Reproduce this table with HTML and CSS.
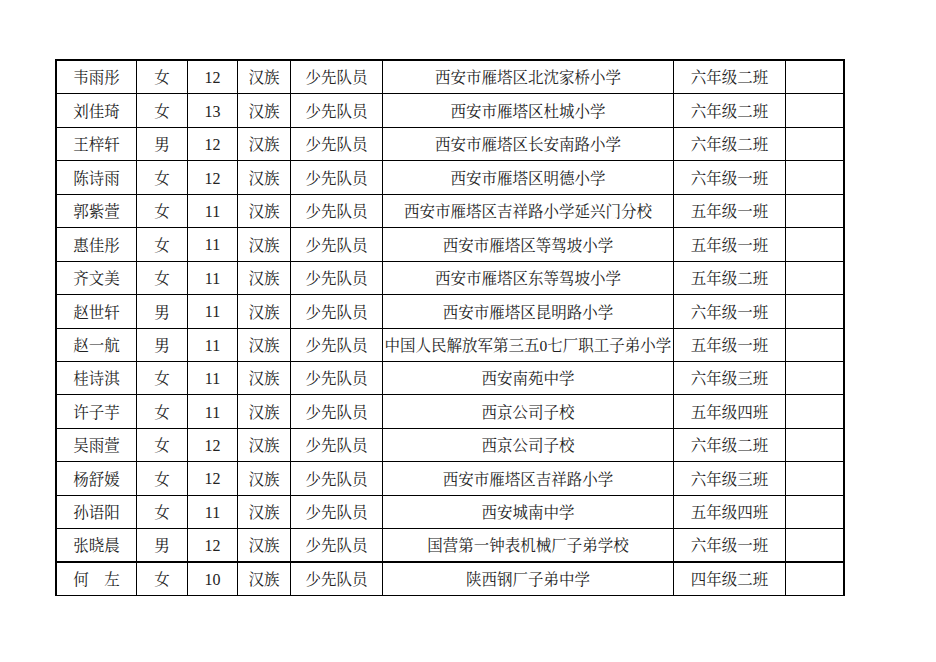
FILE: index.html
```html
<!DOCTYPE html>
<html lang="zh-CN">
<head>
<meta charset="utf-8">
<title>名单</title>
<link rel="stylesheet" href="styles.css">
</head>
<body>
<div class="sheet">
  <div class="c">韦雨彤</div><div class="c">女</div><div class="c num">12</div><div class="c">汉族</div><div class="c">少先队员</div><div class="c">西安市雁塔区北沈家桥小学</div><div class="c">六年级二班</div><div class="c last"></div>
  <div class="c">刘佳琦</div><div class="c">女</div><div class="c num">13</div><div class="c">汉族</div><div class="c">少先队员</div><div class="c">西安市雁塔区杜城小学</div><div class="c">六年级二班</div><div class="c last"></div>
  <div class="c">王梓轩</div><div class="c">男</div><div class="c num">12</div><div class="c">汉族</div><div class="c">少先队员</div><div class="c">西安市雁塔区长安南路小学</div><div class="c">六年级二班</div><div class="c last"></div>
  <div class="c">陈诗雨</div><div class="c">女</div><div class="c num">12</div><div class="c">汉族</div><div class="c">少先队员</div><div class="c">西安市雁塔区明德小学</div><div class="c">六年级一班</div><div class="c last"></div>
  <div class="c">郭紫萱</div><div class="c">女</div><div class="c num">11</div><div class="c">汉族</div><div class="c">少先队员</div><div class="c">西安市雁塔区吉祥路小学延兴门分校</div><div class="c">五年级一班</div><div class="c last"></div>
  <div class="c">惠佳彤</div><div class="c">女</div><div class="c num">11</div><div class="c">汉族</div><div class="c">少先队员</div><div class="c">西安市雁塔区等驾坡小学</div><div class="c">五年级一班</div><div class="c last"></div>
  <div class="c">齐文美</div><div class="c">女</div><div class="c num">11</div><div class="c">汉族</div><div class="c">少先队员</div><div class="c">西安市雁塔区东等驾坡小学</div><div class="c">五年级二班</div><div class="c last"></div>
  <div class="c">赵世轩</div><div class="c">男</div><div class="c num">11</div><div class="c">汉族</div><div class="c">少先队员</div><div class="c">西安市雁塔区昆明路小学</div><div class="c">六年级一班</div><div class="c last"></div>
  <div class="c">赵一航</div><div class="c">男</div><div class="c num">11</div><div class="c">汉族</div><div class="c">少先队员</div><div class="c">中国人民解放军第三五0七厂职工子弟小学</div><div class="c">五年级一班</div><div class="c last"></div>
  <div class="c">桂诗淇</div><div class="c">女</div><div class="c num">11</div><div class="c">汉族</div><div class="c">少先队员</div><div class="c">西安南苑中学</div><div class="c">六年级三班</div><div class="c last"></div>
  <div class="c">许子芋</div><div class="c">女</div><div class="c num">11</div><div class="c">汉族</div><div class="c">少先队员</div><div class="c">西京公司子校</div><div class="c">五年级四班</div><div class="c last"></div>
  <div class="c">吴雨萱</div><div class="c">女</div><div class="c num">12</div><div class="c">汉族</div><div class="c">少先队员</div><div class="c">西京公司子校</div><div class="c">六年级二班</div><div class="c last"></div>
  <div class="c">杨舒媛</div><div class="c">女</div><div class="c num">12</div><div class="c">汉族</div><div class="c">少先队员</div><div class="c">西安市雁塔区吉祥路小学</div><div class="c">六年级三班</div><div class="c last"></div>
  <div class="c">孙语阳</div><div class="c">女</div><div class="c num">11</div><div class="c">汉族</div><div class="c">少先队员</div><div class="c">西安城南中学</div><div class="c">五年级四班</div><div class="c last"></div>
  <div class="c thick">张晓晨</div><div class="c thick">男</div><div class="c thick num">12</div><div class="c thick">汉族</div><div class="c thick">少先队员</div><div class="c thick">国营第一钟表机械厂子弟学校</div><div class="c thick">六年级一班</div><div class="c thick last"></div>
  <div class="c">何　左</div><div class="c">女</div><div class="c num">10</div><div class="c">汉族</div><div class="c">少先队员</div><div class="c">陕西钢厂子弟中学</div><div class="c">四年级二班</div><div class="c last"></div>
</div>
</body>
</html>
```

FILE: styles.css
```css
html, body {
  margin: 0;
  padding: 0;
  background: #ffffff;
}

.sheet {
  margin: 59px 0 0 55px;
  width: 790px;
  height: 537px;
  box-sizing: border-box;
  border-top: 2px solid #000;
  border-left: 2px solid #000;
  display: grid;
  grid-template-columns: 80px 51px 50px 53px 92px 291px 112px 59px;
  grid-template-rows: repeat(16, 1fr);
  font-family: "Liberation Serif", "Noto Serif CJK SC", "Noto Sans CJK SC", serif;
  font-size: 15.5px;
  color: #222222;
}

.c {
  box-sizing: border-box;
  border-right: 1px solid #000;
  border-bottom: 1px solid #000;
  padding-top: 2px;
  display: flex;
  align-items: center;
  justify-content: center;
  white-space: nowrap;
  overflow: hidden;
  line-height: 1;
}

.c.num {
  font-size: 16px;
}

.c.last {
  border-right: 2px solid #000;
}

.c.thick {
  border-bottom: 2px solid #000;
}
```
